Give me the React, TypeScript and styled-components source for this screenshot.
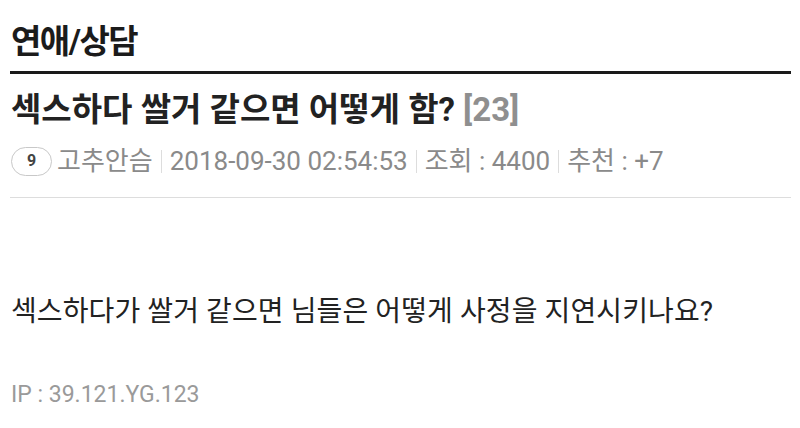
import React from "react";
import styled, { createGlobalStyle } from "styled-components";

const GlobalStyle = createGlobalStyle`
  html, body { margin: 0; padding: 0; background: #fff; }
  body { font-family: Roboto, "Noto Sans CJK KR", sans-serif; }
`;

const Page = styled.div`
  width: 800px;
  height: 428px;
  box-sizing: border-box;
  padding: 0 9px 0 10px;
  overflow: hidden;
`;

const BoardHeader = styled.header`
  border-bottom: 3px solid #1a1a1a;
  padding: 20px 0 7px 1px;
`;

const BoardName = styled.h1`
  margin: 0;
  font-size: 33px;
  line-height: 44px;
  font-weight: 700;
  color: #1b1b1b;
  letter-spacing: -1.5px;
`;

const PostHead = styled.section`
  border-bottom: 1px solid #ddd;
  padding: 16px 0 20px 1px;
`;

const Title = styled.h2`
  margin: 0;
  font-size: 33px;
  line-height: 40px;
  font-weight: 700;
  color: #222;
`;

const CommentCount = styled.span`
  color: #8f8f8f;
  font-weight: 700;
`;

const Meta = styled.div`
  display: flex;
  align-items: center;
  margin-top: 15px;
  font-size: 26px;
  line-height: 32px;
  color: #8a8a8a;
`;

const LevelBadge = styled.span`
  display: inline-flex;
  align-items: center;
  justify-content: center;
  box-sizing: border-box;
  width: 41px;
  height: 29px;
  border: 1.5px solid #c8c8c8;
  border-radius: 15px;
  font-size: 16px;
  font-weight: 700;
  color: #444;
  margin-right: 5px;
`;

const Sep = styled.span`
  display: inline-block;
  width: 1px;
  height: 23px;
  background: #ddd;
  margin: 0 8px;
`;

const Body = styled.article`
  padding: 96px 0 0 1px;
`;

const Paragraph = styled.p`
  margin: 0;
  font-size: 28px;
  line-height: 36px;
  color: #222;
  letter-spacing: 0.1px;
`;

const IpLine = styled.div`
  margin-top: 50px;
  font-size: 23px;
  line-height: 30px;
  color: #9a9a9a;
`;

export default function App() {
  return (
    <>
      <GlobalStyle />
      <Page>
        <BoardHeader>
          <BoardName>연애/상담</BoardName>
        </BoardHeader>
        <PostHead>
          <Title>
            섹스하다 쌀거 같으면 어떻게 함? <CommentCount>[23]</CommentCount>
          </Title>
          <Meta>
            <LevelBadge>9</LevelBadge>
            <span>고추안슴</span>
            <Sep />
            <span>2018-09-30 02:54:53</span>
            <Sep />
            <span>조회 : 4400</span>
            <Sep />
            <span>추천 : +7</span>
          </Meta>
        </PostHead>
        <Body>
          <Paragraph>섹스하다가 쌀거 같으면 님들은 어떻게 사정을 지연시키나요?</Paragraph>
          <IpLine>IP : 39.121.YG.123</IpLine>
        </Body>
      </Page>
    </>
  );
}
